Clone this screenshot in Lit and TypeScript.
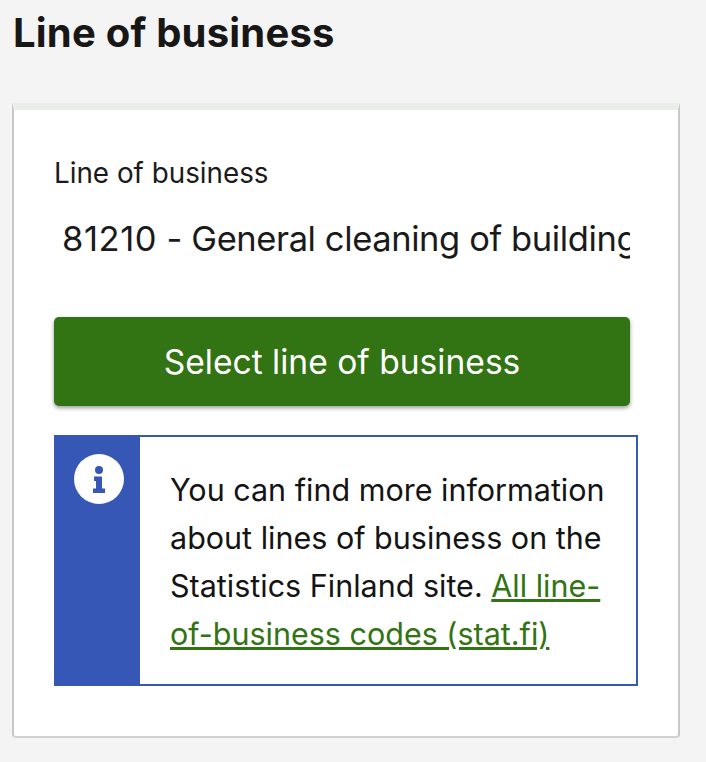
import { LitElement, html, css } from "lit";
import { customElement } from "lit/decorators.js";

@customElement("app-root")
export class AppRoot extends LitElement {
  static styles = css`
    :host {
      display: block;
      width: 706px;
      height: 762px;
      overflow: hidden;
      background: #f4f4f4;
      font-family: Inter, "Liberation Sans", sans-serif;
      color: #1a1a1a;
    }
    .page {
      display: flex;
      flex-direction: column;
      padding: 0 27px 0 13px;
    }
    h1 {
      margin: 0;
      height: 103px;
      padding-top: 8px;
      box-sizing: border-box;
      font-size: 40px;
      line-height: 50px;
      font-weight: 700;
      letter-spacing: 0.2px;
      color: #171717;
    }
    .card {
      box-sizing: border-box;
      height: 635px;
      margin: 0 -1px;
      background: #fff;
      border-top: 7px solid #e9eee8;
      border-left: 2px solid #c8c8c8;
      border-right: 2px solid #c8c8c8;
      border-bottom: 2px solid #d2d2d2;
      border-radius: 0 0 4px 4px;
      padding: 44px 0 0 40px;
      display: flex;
      flex-direction: column;
    }
    .label {
      font-size: 27.8px;
      line-height: 38px;
      width: 400px;
    }
    .value {
      width: 576px;
      box-sizing: border-box;
      padding-left: 8px;
      margin-top: 22px;
      font-size: 34.5px;
      line-height: 50px;
      letter-spacing: -0.4px;
      white-space: nowrap;
      overflow: hidden;
    }
    .code {
      letter-spacing: 0.6px;
    }
    .btn {
      margin-top: 53px;
      width: 576px;
      height: 89px;
      border: 0;
      border-radius: 5px;
      background: #327313;
      color: #fff;
      font: inherit;
      font-size: 33.6px;
      box-shadow: 0 2px 4px rgba(0, 0, 0, 0.4);
      padding: 0;
    }
    .info {
      margin-top: 29px;
      width: 584px;
      height: 251px;
      box-sizing: border-box;
      border: 2px solid #3757b7;
      display: flex;
      background: #fff;
    }
    .side {
      width: 84px;
      flex: none;
      background: #3757b7;
      display: flex;
      justify-content: center;
      padding: 17px 0 0 2px;
      box-sizing: border-box;
    }
    .side svg {
      width: 50px;
      height: 50px;
    }
    .text {
      padding: 29px 0 0 30px;
      font-size: 30.5px;
      line-height: 48px;
      color: #141414;
      width: 438px;
    }
    a {
      color: #327313;
      text-decoration: underline;
    }
  `;

  render() {
    return html`
      <div class="page">
        <h1>Line of business</h1>
        <section class="card">
          <div class="label">Line of business</div>
          <div class="value"><span class="code">81210</span> - General cleaning of buildings</div>
          <button class="btn">Select line of business</button>
          <div class="info">
            <div class="side">
              <svg viewBox="0 0 50 50">
                <circle cx="25" cy="25" r="25" fill="#fff" />
                <circle cx="25" cy="16" r="4" fill="#3757b7" />
                <path
                  d="M20 22.500h8v12h3v4.500h-12v-4.500h3v-7.500h-2z"
                  fill="#3757b7"
                />
              </svg>
            </div>
            <div class="text">
              You can find more information about lines of business on the
              Statistics Finland site.
              <a href="#">All line-of-business codes (stat.fi)</a>
            </div>
          </div>
        </section>
      </div>
    `;
  }
}
